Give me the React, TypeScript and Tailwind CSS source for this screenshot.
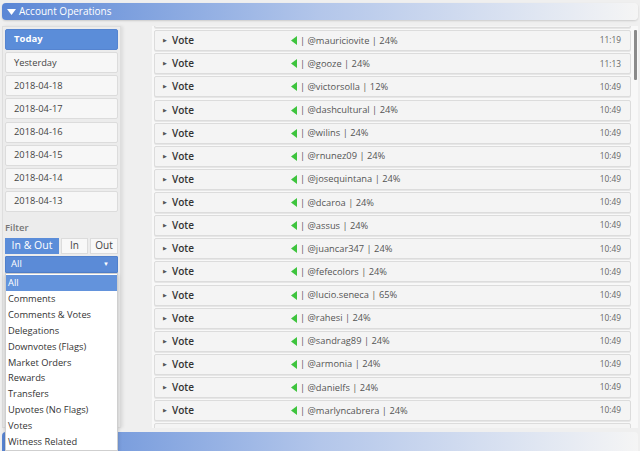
import React, { useEffect, useRef } from 'react';

const dates = ['Today', 'Yesterday', '2018-04-18', '2018-04-17', '2018-04-16', '2018-04-15', '2018-04-14', '2018-04-13'];

const filters = [
  'All',
  'Comments',
  'Comments & Votes',
  'Delegations',
  'Downvotes (Flags)',
  'Market Orders',
  'Rewards',
  'Transfers',
  'Upvotes (No Flags)',
  'Votes',
  'Witness Related',
];

// null = row scrolled mostly out of view
const ops: ([string, string, string] | null)[] = [
  null,
  ['mauriciovite', '24%', '11:19'],
  ['gooze', '24%', '11:13'],
  ['victorsolla', '12%', '10:49'],
  ['dashcultural', '24%', '10:49'],
  ['wilins', '24%', '10:49'],
  ['rnunez09', '24%', '10:49'],
  ['josequintana', '24%', '10:49'],
  ['dcaroa', '24%', '10:49'],
  ['assus', '24%', '10:49'],
  ['juancar347', '24%', '10:49'],
  ['fefecolors', '24%', '10:49'],
  ['lucio.seneca', '65%', '10:49'],
  ['rahesi', '24%', '10:49'],
  ['sandrag89', '24%', '10:49'],
  ['armonia', '24%', '10:49'],
  ['danielfs', '24%', '10:49'],
  ['marlyncabrera', '24%', '10:49'],
  null,
  null,
];

function OpRow({ op }: { op: [string, string, string] | null }) {
  return (
    <div className="h-[21px] shrink-0 flex items-center pl-[8px] pr-[9px] bg-[#f4f4f4] border border-[#dcdcdc] rounded-[2px] shadow-[0_1px_0_#e6e6e6]">
      {op && (
        <>
          <span className="w-[9px] text-[5px] text-[#555] leading-none">&#9654;</span>
          <span className="w-[119px] text-[10px] font-semibold text-[#333]">Vote</span>
          <svg width="6" height="9" viewBox="0 0 6 9" className="mr-[3px]">
            <polygon points="6,0 6,9 0,4.5" fill="#3ec43e" />
          </svg>
          <span className="flex-1 text-[9.3px] text-[#555]">| @{op[0]} | {op[1]}</span>
          <span className="text-[8.3px] text-[#666]">{op[2]}</span>
        </>
      )}
    </div>
  );
}

export default function App() {
  const listRef = useRef<HTMLDivElement>(null);

  useEffect(() => {
    if (listRef.current) listRef.current.scrollTop = 19;
  }, []);

  return (
    <div
      className="w-[640px] h-[451px] overflow-hidden bg-[#efefef] flex flex-col pt-[3px] px-[2px] relative"
      style={{ fontFamily: '"Open Sans", "Noto Sans", sans-serif' }}
    >
      <div className="h-[17px] shrink-0 rounded-[4px] bg-gradient-to-r from-[#5a86d5] via-[#b3c6ea] to-[#f5f5f5] flex items-center pl-[5px] text-white text-[10px] shadow-[0_1px_2px_rgba(0,0,0,0.15)]">
        <svg width="9" height="6" viewBox="0 0 9 6" className="mr-[3px]">
          <polygon points="0,0 9,0 4.5,6" fill="#ffffff" />
        </svg>
        <span>Account Operations</span>
      </div>

      <div className="flex flex-1 min-h-0 mt-[6px]">
        <div className="w-[119px] shrink-0 bg-[#ececec] border border-[#dedede] shadow-[2px_0_3px_rgba(0,0,0,0.08)] px-[2px] pt-[2px] flex flex-col relative">
          <div className="flex flex-col gap-[2.14px]">
            {dates.map((d, i) => (
              <div
                key={d}
                className={
                  i === 0
                    ? 'h-[21px] flex items-center pl-[8px] rounded-[2px] bg-[#5b8dd9] text-white text-[9.5px] font-bold border border-[#5584d0]'
                    : 'h-[21px] flex items-center pl-[8px] rounded-[2px] bg-[#f7f7f7] text-[#444] text-[9.3px] border border-[#dcdcdc]'
                }
              >
                {d}
              </div>
            ))}
          </div>
          <div className="mt-[9px] text-[9.5px] font-semibold text-[#777] leading-[14px]">Filter</div>
          <div className="flex gap-[2px] mt-[3px] h-[16px]">
            <div className="w-[54px] bg-[#5b8dd9] text-white text-[10.5px] flex items-center justify-center">In &amp; Out</div>
            <div className="w-[27px] bg-[#f8f8f8] border border-[#dcdcdc] text-[#444] text-[10px] flex items-center justify-center">In</div>
            <div className="flex-1 bg-[#f8f8f8] border border-[#dcdcdc] text-[#444] text-[10px] flex items-center justify-center">Out</div>
          </div>
          <div className="mt-[2px] h-[17px] bg-[#5b8bd7] border border-[#5080cc] rounded-[1px] flex items-center justify-between pl-[5px] pr-[8px] text-white text-[9.5px]">
            <span>All</span>
            <span className="text-[6px]">&#9660;</span>
          </div>
          <div className="absolute left-[2px] right-[2px] top-[246px] z-10 bg-white border border-[#cfcfcf] shadow-[0_2px_4px_rgba(0,0,0,0.2)] pt-[1px]">
            {filters.map((f, i) => (
              <div
                key={f}
                className={
                  i === 0
                    ? 'h-[16px] flex items-center pl-[2px] bg-[#6393dc] text-white text-[9.3px]'
                    : 'h-[15.9px] flex items-center pl-[2px] text-[#333] text-[9.3px]'
                }
              >
                {f}
              </div>
            ))}
          </div>
        </div>

        <div className="flex-1 min-w-0 ml-[31px] relative bg-[#f8f8f8]">
          <div ref={listRef} className="h-full overflow-hidden pl-[2px] pr-[7px] flex flex-col gap-[2.125px]">
            {ops.map((op, i) => (
              <OpRow key={i} op={op} />
            ))}
          </div>
          <div className="absolute right-[1px] top-[4px] w-[3px] h-[50px] bg-[#8a8a8a] rounded-[1px]" />
        </div>
      </div>

      <div className="h-[19px] shrink-0 mt-[4px] rounded-t-[4px] bg-gradient-to-r from-[#5a86d5] via-[#b3c6ea] to-[#f5f5f5]" />
    </div>
  );
}
